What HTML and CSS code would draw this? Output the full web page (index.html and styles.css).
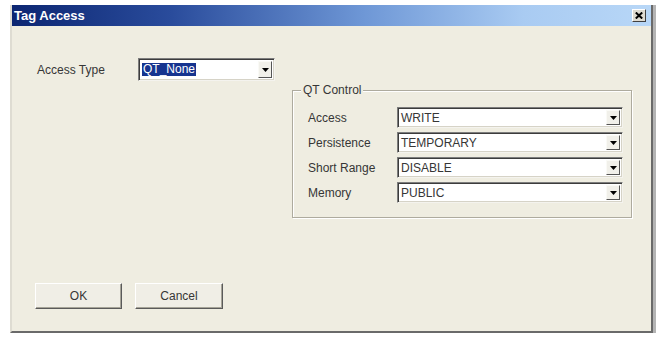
FILE: index.html
```html
<!DOCTYPE html>
<html>
<head>
<meta charset="utf-8">
<link rel="stylesheet" href="styles.css">
</head>
<body>
<div class="window">
  <div class="titlebar">
    <span class="title">Tag Access</span>
    <span class="close"><svg width="8" height="7" viewBox="0 0 8 7"><path d="M0.8 0.5 L7.2 6.5 M7.2 0.5 L0.8 6.5" stroke="#000" stroke-width="2" fill="none"/></svg></span>
  </div>
  <div class="content">
    <div class="access-row">
      <span class="label access-label">Access Type</span>
      <div class="combo combo-main">
        <span class="sel">QT_None</span>
        <span class="arrow-btn"><svg width="7" height="4" viewBox="0 0 7 4"><path d="M0 0 H7 L3.5 4 Z" fill="#000"/></svg></span>
      </div>
    </div>
    <fieldset class="group">
      <legend>QT Control</legend>
      <div class="grid">
        <span class="label">Access</span>
        <div class="combo"><span class="val">WRITE</span><span class="arrow-btn"><svg width="7" height="4" viewBox="0 0 7 4"><path d="M0 0 H7 L3.5 4 Z" fill="#000"/></svg></span></div>
        <span class="label">Persistence</span>
        <div class="combo"><span class="val">TEMPORARY</span><span class="arrow-btn"><svg width="7" height="4" viewBox="0 0 7 4"><path d="M0 0 H7 L3.5 4 Z" fill="#000"/></svg></span></div>
        <span class="label">Short Range</span>
        <div class="combo"><span class="val">DISABLE</span><span class="arrow-btn"><svg width="7" height="4" viewBox="0 0 7 4"><path d="M0 0 H7 L3.5 4 Z" fill="#000"/></svg></span></div>
        <span class="label">Memory</span>
        <div class="combo"><span class="val">PUBLIC</span><span class="arrow-btn"><svg width="7" height="4" viewBox="0 0 7 4"><path d="M0 0 H7 L3.5 4 Z" fill="#000"/></svg></span></div>
      </div>
    </fieldset>
    <div class="buttons">
      <button class="btn btn-ok">OK</button>
      <button class="btn btn-cancel">Cancel</button>
    </div>
  </div>
</div>
</body>
</html>
```

FILE: styles.css
```css
html, body {
  margin: 0;
  padding: 0;
  background: #ffffff;
}
body {
  font-family: "Liberation Sans", Arial, sans-serif;
  font-size: 12px;
  color: #363636;
}
.window {
  margin: 5px 0 0 10px;
  width: 643px;
  height: 328px;
  box-sizing: border-box;
  border-left: 2px solid #dedcd2;
  border-right: 2px solid #6a6a6a;
  border-bottom: 2px solid #6a6a6a;
  background: #efede1;
  display: flex;
  flex-direction: column;
  box-shadow: 3px 0 0 #b4b4b4;
}
.titlebar {
  height: 21px;
  flex: none;
  background: linear-gradient(to right, #0c2672 0%, #2a4c9c 25%, #6e97d6 55%, #a9cbf2 80%, #b8d7f7 100%);
  display: flex;
  align-items: center;
  justify-content: space-between;
}
.title {
  color: #ffffff;
  font-weight: bold;
  font-size: 13px;
  padding-left: 2px;
}
.close {
  width: 14px;
  height: 13px;
  box-sizing: border-box;
  margin-right: 5px;
  background: #dedbd1;
  border-top: 1px solid #ffffff;
  border-left: 1px solid #ffffff;
  border-right: 1px solid #404040;
  border-bottom: 1px solid #404040;
  display: flex;
  align-items: center;
  justify-content: center;
}
.content {
  flex: 1;
  display: flex;
  flex-direction: column;
}
.access-row {
  display: flex;
  align-items: center;
  margin: 32px 0 0 25px;
  height: 23px;
}
.access-label {
  width: 101px;
}
.combo {
  box-sizing: border-box;
  height: 23px;
  background: #ffffff;
  border-top: 1px solid #7d7d7d;
  border-left: 1px solid #7d7d7d;
  border-right: 1px solid #f4f3ee;
  border-bottom: 1px solid #f4f3ee;
  box-shadow: inset 1px 1px 0 #3c3c3c, inset -1px -1px 0 #d6d3c7;
  display: flex;
  align-items: center;
  justify-content: space-between;
  padding: 2px;
}
.combo-main {
  width: 137px;
}
.sel {
  background: #16348f;
  color: #ffffff;
  padding: 0 1px;
  line-height: 13px;
  margin-left: 1px;
}
.val {
  color: #363636;
  padding-left: 1px;
}
.arrow-btn {
  width: 14px;
  height: 17px;
  box-sizing: border-box;
  background: #f1f0ea;
  border-top: 1px solid #fafaf6;
  border-left: 1px solid #fafaf6;
  border-right: 1px solid #555555;
  border-bottom: 1px solid #555555;
  display: flex;
  align-items: center;
  justify-content: center;
}
.group {
  margin: 2px 0 0 280px;
  width: 340px;
  height: 135px;
  box-sizing: border-box;
  padding: 10px 8px 0 15px;
  border: 1px solid #aeab9e;
  box-shadow: inset 1px 1px 0 #ffffff, 1px 1px 0 #ffffff;
}
.group legend {
  padding: 0 2px;
  margin-left: -7px;
  line-height: 14px;
  background: #efede1;
  color: #363636;
}
.grid {
  display: grid;
  grid-template-columns: 89px 226px;
  grid-auto-rows: 21px;
  row-gap: 4px;
  align-items: center;
}
.grid .combo {
  height: 21px;
}
.grid .arrow-btn {
  height: 15px;
}
.buttons {
  margin: auto 0 22px 23px;
  display: flex;
  gap: 13px;
}
.btn {
  font-family: "Liberation Sans", Arial, sans-serif;
  font-size: 12px;
  color: #363636;
  height: 26px;
  box-sizing: border-box;
  background: #f0eee6;
  border-top: 1px solid #ffffff;
  border-left: 1px solid #ffffff;
  border-right: 1px solid #5a5a5a;
  border-bottom: 1px solid #5a5a5a;
  box-shadow: inset -1px -1px 0 #a6a498;
  padding: 0;
}
.btn-ok {
  width: 87px;
}
.btn-cancel {
  width: 88px;
}
```
